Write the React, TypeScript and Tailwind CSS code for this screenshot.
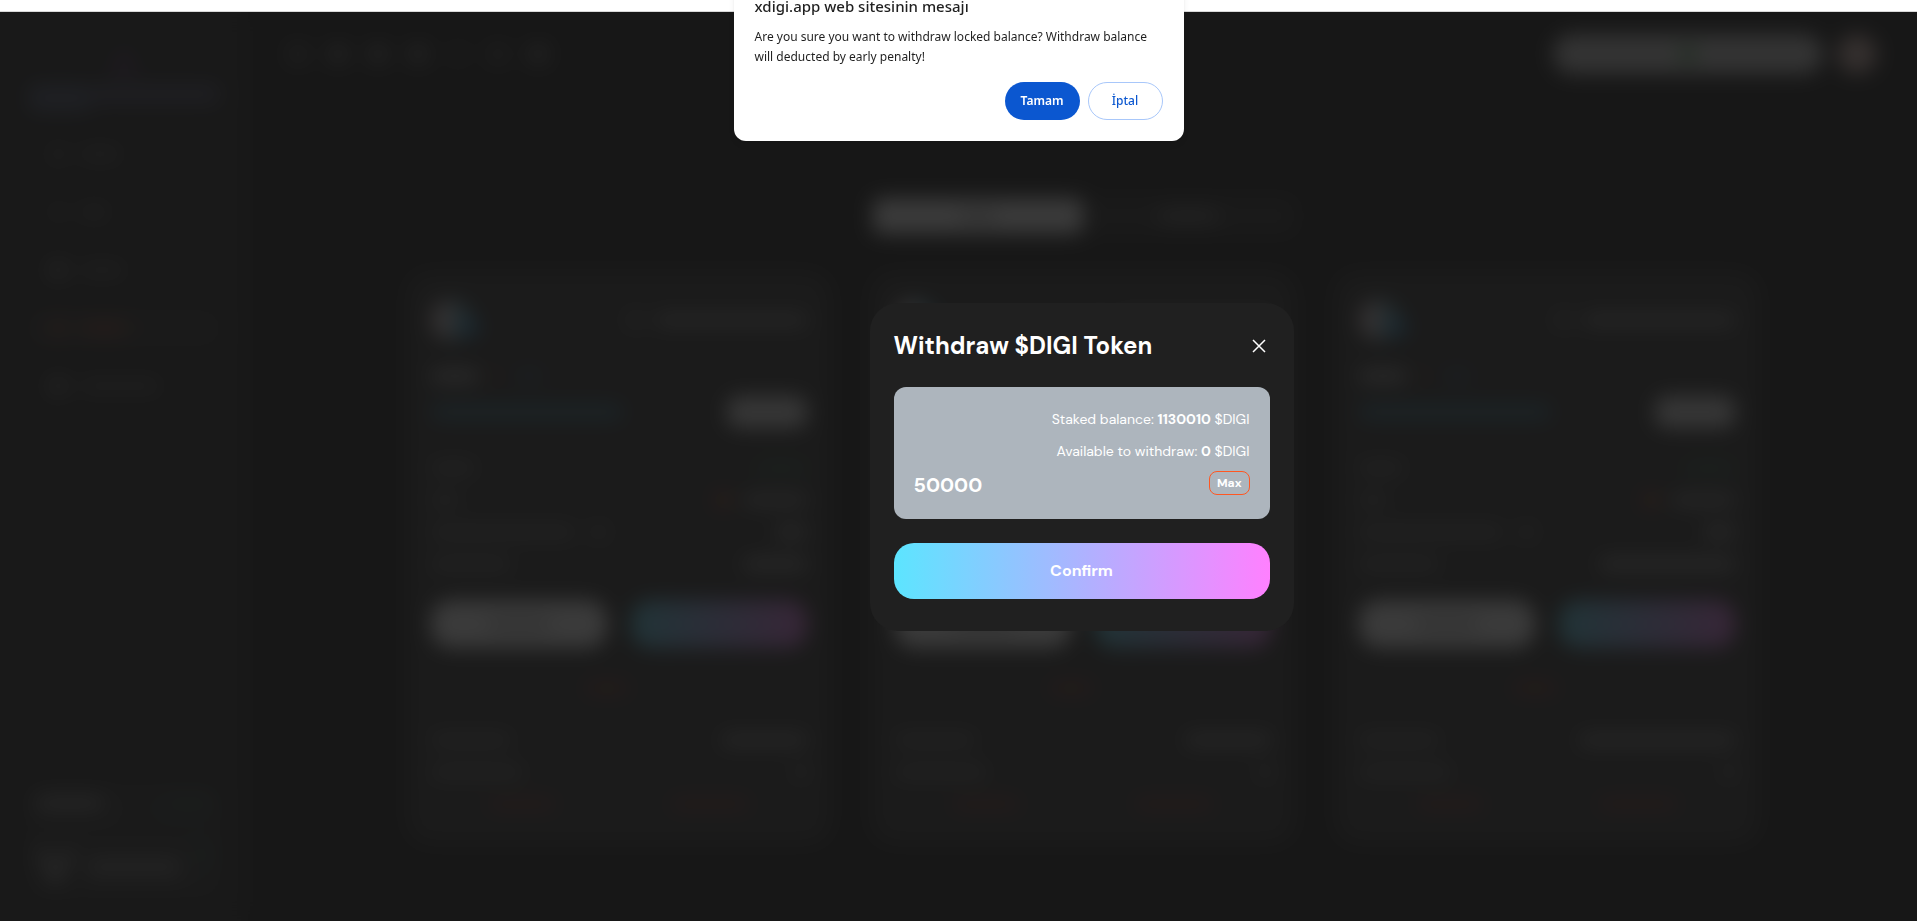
import { useState } from "react";
import type { ReactNode } from "react";

function Bar({ className }: { className: string }) {
  return <span className={`block h-3 rounded-full ${className}`} />;
}

function Row({ left, right }: { left: ReactNode; right: ReactNode }) {
  return (
    <div className="flex h-8 items-center justify-between">
      <div className="flex items-center gap-4">{left}</div>
      <div className="flex items-center gap-3">{right}</div>
    </div>
  );
}

const navItems = [
  { width: "w-10", icon: "bg-white/15", text: "bg-white/20", box: "" },
  { width: "w-7", icon: "bg-white/10", text: "bg-white/20", box: "" },
  { width: "w-11", icon: "bg-white/30", text: "bg-white/20", box: "" },
  { width: "w-12", icon: "bg-[#f4511e]/30", text: "bg-[#f4511e]/40", box: "bg-white/5" },
  { width: "w-20", icon: "bg-white/30", text: "bg-white/20", box: "" },
];

function Sidebar() {
  return (
    <aside className="flex w-[248px] shrink-0 flex-col bg-[#222222] px-7 pt-8 pb-6">
      <div className="flex flex-col items-center gap-2">
        <svg viewBox="0 0 32 32" className="h-8 w-8">
          <path d="M16 2 30 30H2Z" fill="#4a2a58" />
        </svg>
        <div className="flex h-7 w-full items-start">
          <span className="h-7 w-16 rounded-lg bg-[#7080b0]/50" />
          <span className="h-5 flex-1 rounded-lg bg-[#7070a0]/50" />
        </div>
      </div>
      <nav className="mt-6 flex flex-col gap-[22px]">
        {navItems.map((item, index) => (
          <a
            key={index}
            href="#"
            className={`flex h-9 items-center gap-3 rounded-xl px-5 ${item.box}`}
          >
            <span className={`h-5 w-5 rounded-full ${item.icon}`} />
            <Bar className={`${item.width} ${item.text}`} />
          </a>
        ))}
      </nav>
      <div className="mt-auto flex h-28 flex-col justify-between rounded-2xl bg-white/5 px-2 py-3">
        <div className="flex items-center justify-between">
          <Bar className="w-[68px] bg-white/40" />
          <Bar className="w-12 bg-[#20c997]/15" />
        </div>
        <div className="flex items-end gap-3">
          <svg viewBox="0 0 40 40" className="h-10 w-10">
            <path d="M4 4 20 34 36 4" fill="none" stroke="#999" strokeWidth="8" />
          </svg>
          <span className="mb-2 h-5 w-24 rounded bg-white/25" />
          <span className="mb-5 h-5 w-5 rounded-full bg-[#20c997]/15" />
        </div>
      </div>
    </aside>
  );
}

const socialIcons = [
  "bg-white/25",
  "bg-white/35",
  "bg-white/35",
  "bg-white/35",
  "bg-white/10",
  "bg-white/20",
  "bg-white/35",
];

function Header() {
  return (
    <header className="flex h-[84px] items-center justify-between px-10">
      <div className="flex gap-5">
        {socialIcons.map((shade, index) => (
          <a key={index} href="#" className={`h-5 w-5 rounded-full ${shade}`} />
        ))}
      </div>
      <div className="flex items-center gap-[14px]">
        <button className="flex h-10 w-[270px] items-center justify-center rounded-full bg-[#d0d0d0]">
          <span className="h-5 w-5 rounded-full bg-[#6cb070]" />
        </button>
        <span className="h-10 w-10 rounded-full bg-[#d8b8b0]" />
      </div>
    </header>
  );
}

type Pool = { total: string; staked: string };

const pools: Pool[] = [
  { total: "w-16", staked: "w-[86px]" },
  { total: "w-16", staked: "w-[86px]" },
  { total: "w-[136px]", staked: "w-[156px]" },
];

function PoolCard({ pool }: { pool: Pool }) {
  return (
    <article className="flex flex-1 flex-col rounded-3xl bg-[#303030] px-6 pt-7 pb-6">
      <div className="flex h-10 items-center justify-between">
        <svg viewBox="0 0 48 40" className="h-10 w-12">
          <circle cx="20" cy="20" r="20" fill="#d8c8cc" />
          <path d="M20 0a20 20 0 0 1 0 40Z" fill="#68a8b8" />
          <circle cx="38" cy="27" r="10" fill="#3090c8" />
        </svg>
        <div className="flex items-center gap-3">
          <span className="h-4 w-4 rounded-full bg-white/30" />
          <Bar className="w-[152px] bg-white/40" />
        </div>
      </div>
      <div className="mt-6 flex h-6 items-center gap-3">
        <Bar className="w-12 bg-white/55" />
        <span className="h-2 w-2 rounded-full bg-[#f4511e]/50" />
        <Bar className="ml-1 w-7 bg-[#3d8bfd]/25" />
      </div>
      <div className="mt-1.5 flex h-9 items-center justify-between">
        <span className="h-4 w-48 rounded-lg bg-[#3fa0c8]/50" />
        <button className="h-8 w-20 rounded-xl bg-[#e4e4e4]" />
      </div>
      <div className="mt-[22px]">
        <Row
          left={<Bar className="w-11 bg-white/25" />}
          right={<Bar className="w-[52px] bg-[#38a765]/35" />}
        />
        <Row
          left={<Bar className="w-7 bg-white/25" />}
          right={
            <>
              <span className="h-4 w-4 rounded-full bg-[#f4511e]/60" />
              <Bar className="w-16 bg-white/40" />
            </>
          }
        />
        <Row
          left={
            <>
              <Bar className="w-36 bg-white/25" />
              <span className="h-4 w-4 rounded-full bg-white/25" />
            </>
          }
          right={<Bar className="w-8 bg-white/45" />}
        />
        <Row
          left={<Bar className="w-20 bg-white/25" />}
          right={<Bar className={`bg-white/45 ${pool.total}`} />}
        />
      </div>
      <div className="mt-5 grid grid-cols-2 gap-6">
        <button className="flex h-12 items-center justify-center rounded-[20px] bg-white">
          <Bar className="w-16 bg-black/25" />
        </button>
        <button className="h-12 rounded-[20px] bg-linear-to-r/srgb from-[#5ce5ff] to-[#ff80ff] opacity-90" />
      </div>
      <div className="mt-8 flex h-4 items-center justify-center pr-6">
        <Bar className="w-11 bg-[#f4511e]/35" />
      </div>
      <div className="mt-7">
        <Row
          left={<Bar className="w-20 bg-white/25" />}
          right={<Bar className={`bg-white/40 ${pool.staked}`} />}
        />
        <Row
          left={<Bar className="w-[92px] bg-white/25" />}
          right={<Bar className="w-3 bg-white/40" />}
        />
      </div>
      <div className="flex h-8 items-center justify-around">
        <Bar className="w-[68px] bg-[#f4511e]/30" />
        <Bar className="w-20 bg-[#f4511e]/30" />
      </div>
    </article>
  );
}

function Backdrop() {
  return (
    <div inert aria-hidden="true" className="flex flex-1 bg-[#171717]">
      <Sidebar />
      <main className="flex min-w-0 flex-1 flex-col">
        <Header />
        <div className="mx-auto w-full max-w-[1352px]">
          <div className="mx-auto mt-[102px] grid h-9 w-[424px] grid-cols-2 rounded-lg bg-[#2a2a2a] px-0.5">
            <button className="flex items-center justify-center rounded-lg bg-white">
              <Bar className="w-10 bg-black/25" />
            </button>
            <button className="flex items-center justify-center">
              <Bar className="w-[60px] bg-white/30" />
            </button>
          </div>
          <section className="mt-[38px] flex gap-10">
            {pools.map((pool, index) => (
              <PoolCard key={index} pool={pool} />
            ))}
          </section>
        </div>
      </main>
    </div>
  );
}

function WithdrawModal() {
  const [amount, setAmount] = useState("50000");
  return (
    <section
      role="dialog"
      aria-labelledby="withdraw-title"
      className="w-[424px] rounded-[28px] bg-[#202020] px-6 pt-6 pb-8 font-['DM_Sans',Inter,sans-serif] text-white"
    >
      <div className="flex h-[38px] items-center justify-between">
        <h2 id="withdraw-title" className="text-2xl font-bold">
          Withdraw $DIGI Token
        </h2>
        <button aria-label="Close" className="p-1">
          <svg viewBox="0 0 14 14" className="h-[14px] w-[14px]">
            <path d="M1 1 13 13M13 1 1 13" stroke="white" strokeWidth="1.5" fill="none" />
          </svg>
        </button>
      </div>
      <div className="mt-[22px] rounded-xl bg-[#adb5bd] px-5 pt-4 pb-5 text-sm">
        <p className="h-8 text-right leading-8">
          Staked balance: <b>1130010</b> $DIGI
        </p>
        <p className="h-8 text-right leading-8">
          Available to withdraw: <b>0</b> $DIGI
        </p>
        <div className="flex h-8 items-center justify-between">
          <input
            aria-label="Amount"
            value={amount}
            onChange={(event) => setAmount(event.target.value)}
            className="w-40 self-end bg-transparent text-xl font-bold outline-none"
          />
          <button
            onClick={() => setAmount("1130010")}
            className="h-6 rounded-lg border border-[#ff5722] px-[7px] text-xs font-bold"
          >
            Max
          </button>
        </div>
      </div>
      <button className="mt-6 h-14 w-full rounded-[20px] bg-linear-to-r/srgb from-[#5ce5ff] to-[#ff80ff] text-base font-bold">
        Confirm
      </button>
    </section>
  );
}

function BrowserDialog() {
  return (
    <div
      role="alertdialog"
      aria-labelledby="message-title"
      className="absolute -top-5 left-1/2 w-[450px] -translate-x-1/2 rounded-xl bg-white px-[21px] pt-3 pb-[21px] font-['Segoe_UI','Noto_Sans',sans-serif] text-[#1f1f1f] shadow-md"
    >
      <h1 id="message-title" className="text-[15px] leading-7 font-medium">
        xdigi.app web sitesinin mesajı
      </h1>
      <p className="mt-[7px] text-xs leading-5">
        Are you sure you want to withdraw locked balance? Withdraw balance will deducted by early
        penalty!
      </p>
      <div className="mt-[15px] flex justify-end gap-2 text-xs font-semibold">
        <button className="h-[38px] w-[75px] rounded-full bg-[#0b57d0] text-white">Tamam</button>
        <button className="h-[38px] w-[75px] rounded-full border border-[#a8c7fa] font-medium text-[#0b57d0]">
          İptal
        </button>
      </div>
    </div>
  );
}

export default function App() {
  return (
    <div className="relative flex min-h-screen flex-col bg-[#171717]">
      <div className="h-3 border-b border-[#d8d8d8] bg-white" />
      <div className="relative flex flex-1">
        <Backdrop />
        <div className="absolute inset-0 bg-[#171717]/85 backdrop-blur-[10px]" />
        <div className="absolute inset-0 flex items-center justify-center pl-[246px]">
          <WithdrawModal />
        </div>
      </div>
      <BrowserDialog />
    </div>
  );
}
